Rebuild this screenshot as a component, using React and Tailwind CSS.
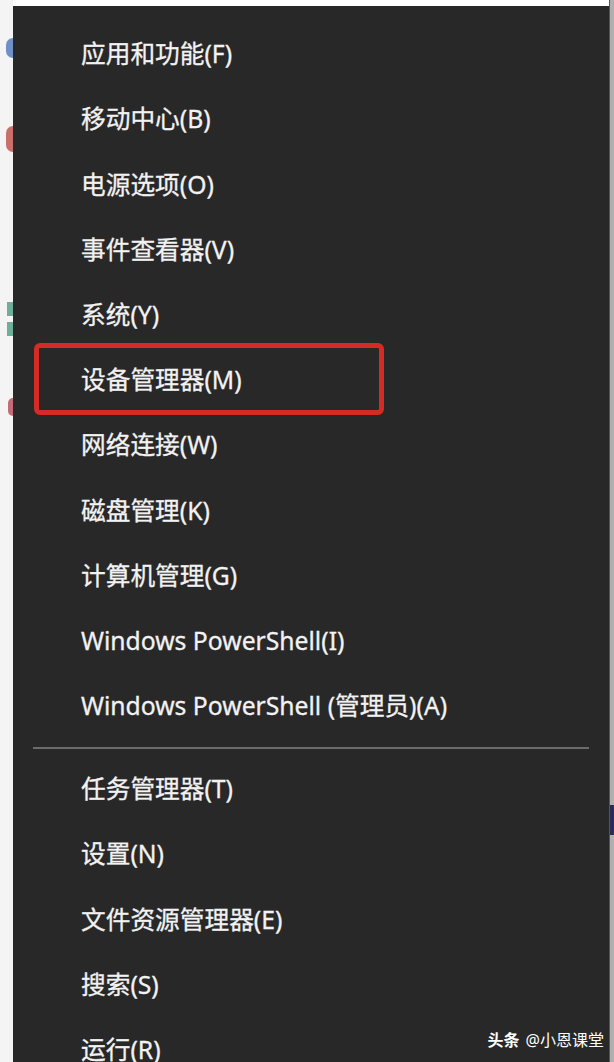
import React from "react";

const top = [
  "应用和功能(F)",
  "移动中心(B)",
  "电源选项(O)",
  "事件查看器(V)",
  "系统(Y)",
  "设备管理器(M)",
  "网络连接(W)",
  "磁盘管理(K)",
  "计算机管理(G)",
  "Windows PowerShell(I)",
  "Windows PowerShell (管理员)(A)",
];
const bottom = ["任务管理器(T)", "设置(N)", "文件资源管理器(E)", "搜索(S)", "运行(R)"];

const font = { fontFamily: '"Noto Sans", "Noto Sans CJK SC", sans-serif' };

function Row({ label, boxed }) {
  return (
    <div className="relative flex h-[65.2px] shrink-0 items-center pl-[68px] text-[24.7px] text-[#f2f2f2]">
      {boxed && (
        <div className="absolute left-[21px] top-[-5px] h-[72px] w-[350px] rounded-[6px] border-[5px] border-[#d52b27]" />
      )}
      <span className="leading-none [-webkit-text-stroke:0.3px_#f2f2f2]">{label}</span>
    </div>
  );
}

export default function App() {
  return (
    <div className="relative flex h-[1062px] w-[614px] overflow-hidden bg-white" style={font}>
      <div className="flex w-[13px] shrink-0 flex-col bg-[#f4f4f4]">
        <div className="mt-[38px] ml-[6px] h-[20px] w-[7px] rounded-l-full bg-[#6f8fc8]" />
        <div className="mt-[68px] ml-[6px] h-[26px] w-[7px] rounded-l-full bg-[#c9706d]" />
        <div className="mt-[150px] ml-[7px] h-[14px] w-[6px] bg-[#6fae98]" />
        <div className="mt-[6px] ml-[7px] h-[14px] w-[6px] bg-[#6fae98]" />
        <div className="mt-[62px] ml-[8px] h-[18px] w-[5px] rounded-l-full bg-[#c56a77]" />
      </div>
      <div className="flex h-full flex-1 flex-col pt-[6px]">
        <div className="flex h-full flex-col overflow-hidden bg-[#282828] pt-[16px]">
          {top.map((t, i) => (
            <Row key={t} label={t} boxed={i === 5} />
          ))}
          <div className="mx-[20px] mt-[8px] mb-[8px] h-[2px] shrink-0 bg-[#6b6b6b]" />
          {bottom.map((t) => (
            <Row key={t} label={t} />
          ))}
        </div>
      </div>
      <div className="flex w-[5px] shrink-0 flex-col border-l border-[#555] bg-[#b0b0b0]">
        <div className="mt-[805px] h-[30px] w-full bg-[#2a2d5a]" />
      </div>
      <div className="absolute bottom-[14px] right-[10px] flex items-center gap-[6px] text-[16px] leading-none text-white">
        <span className="font-bold">头条</span>
        <span>@小恩课堂</span>
      </div>
    </div>
  );
}
